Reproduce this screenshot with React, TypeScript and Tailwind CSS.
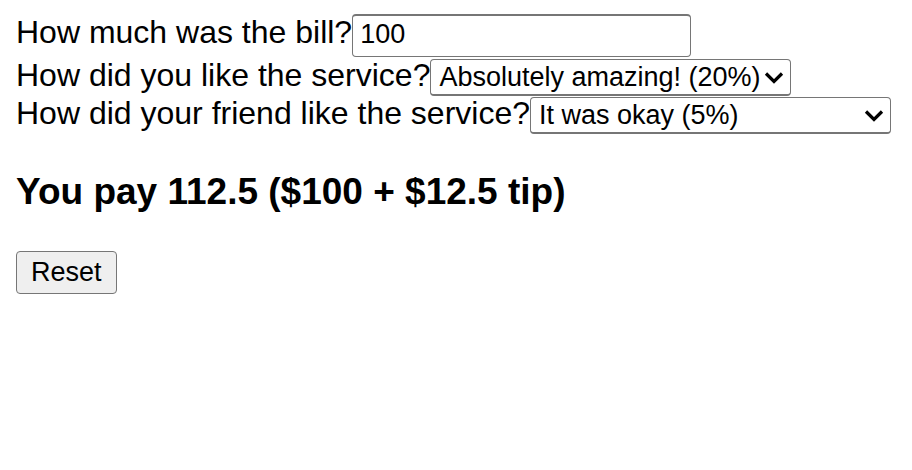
import { useState } from "react";
import type { ReactNode } from "react";

const ratings = [
  { value: 0, label: "Dissatisfied (0%)" },
  { value: 5, label: "It was okay (5%)" },
  { value: 10, label: "It was good (10%)" },
  { value: 20, label: "Absolutely amazing! (20%)" },
];

function RatingSelect({ id, value, onChange, children }: { id: string; value: number; onChange: (v: number) => void; children: ReactNode }) {
  return (
    <div className="flex h-[38px] items-start">
      <label htmlFor={id} className="shrink-0">{children}</label>
      <div className="relative mt-0.5">
        <select
          id={id}
          value={value}
          onChange={(e) => onChange(Number(e.target.value))}
          className="block h-[37px] w-[361px] appearance-none rounded-[4px] border border-b-2 border-[#767676] bg-white pl-2 pr-6 text-[27px] leading-[31px] text-black"
        >
          {ratings.map((r) => (
            <option key={r.value} value={r.value}>{r.label}</option>
          ))}
        </select>
        <svg className="pointer-events-none absolute right-[7px] top-3 h-4 w-5" viewBox="0 0 20 16" fill="none" stroke="black" strokeWidth="3.2">
          <path d="M2 2.5l8 8 8-8" />
        </svg>
      </div>
    </div>
  );
}

export default function App() {
  const [bill, setBill] = useState("100");
  const [mine, setMine] = useState(20);
  const [friend, setFriend] = useState(5);
  const amount = Number(bill);
  const tip = (amount * (mine + friend)) / 200;

  return (
    <main className="px-4 pt-[14px] font-['Liberation_Sans',Arial,sans-serif] text-[32px] leading-[37px] text-black">
      <div className="flex items-start">
        <label htmlFor="bill" className="shrink-0">How much was the bill?</label>
        <input
          id="bill"
          type="text"
          value={bill}
          onChange={(e) => setBill(e.target.value)}
          className="h-[43px] w-[339px] rounded-[4px] border border-t-2 border-[#767676] bg-white px-[7px] pb-1 text-[27px] text-black"
        />
      </div>
      <RatingSelect id="mine" value={mine} onChange={setMine}>How did you like the service?</RatingSelect>
      <RatingSelect id="friend" value={friend} onChange={setFriend}>How did your friend like the service?</RatingSelect>
      <h3 className="mb-[41px] mt-10 text-[37px] font-bold">
        You pay {amount + tip} (${amount} + ${tip} tip)
      </h3>
      <button
        type="button"
        onClick={() => { setBill(""); setMine(0); setFriend(0); }}
        className="block h-[43px] rounded-[4px] border border-[#767676] bg-[#efefef] px-3.5 text-[27px] text-black"
      >
        Reset
      </button>
    </main>
  );
}
